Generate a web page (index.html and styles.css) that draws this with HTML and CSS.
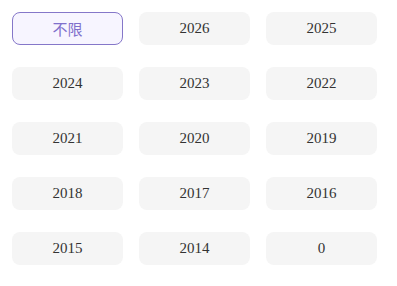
FILE: index.html
```html
<!DOCTYPE html>
<html lang="zh-CN">
<head>
    <meta charset="UTF-8">
    <meta name="viewport" content="width=device-width, initial-scale=1.0">
    <title>年份</title>
    <link rel="stylesheet" href="styles.css">
</head>
<body>

<div class="year-grid">
    <div class="year-item active">不限</div>
    <div class="year-item">2026</div>
    <div class="year-item">2025</div>
    <div class="year-item">2024</div>
    <div class="year-item">2023</div>
    <div class="year-item">2022</div>
    <div class="year-item">2021</div>
    <div class="year-item">2020</div>
    <div class="year-item">2019</div>
    <div class="year-item">2018</div>
    <div class="year-item">2017</div>
    <div class="year-item">2016</div>
    <div class="year-item">2015</div>
    <div class="year-item">2014</div>
    <div class="year-item">0</div>
</div>

</body>
</html>
```

FILE: styles.css
```css
body {
    margin: 0;
    padding: 0;
    background-color: #ffffff;
    font-family: "Liberation Serif", "Noto Sans CJK SC", serif;
    color: #333333;
}

.year-grid {
    display: grid;
    grid-template-columns: repeat(3, 111px);
    column-gap: 16px;
    row-gap: 22px;
    padding: 12px;
}

.year-item {
    height: 33px;
    box-sizing: border-box;
    display: flex;
    justify-content: center;
    align-items: center;
    font-size: 15px;
    background-color: #f5f5f5;
    border-radius: 8px;
}

.year-item.active {
    background-color: #f7f5ff;
    border: 1px solid #8577c9;
    color: #8070cc;
    font-family: "Noto Sans CJK SC", sans-serif;
    font-size: 15px;
}
```
